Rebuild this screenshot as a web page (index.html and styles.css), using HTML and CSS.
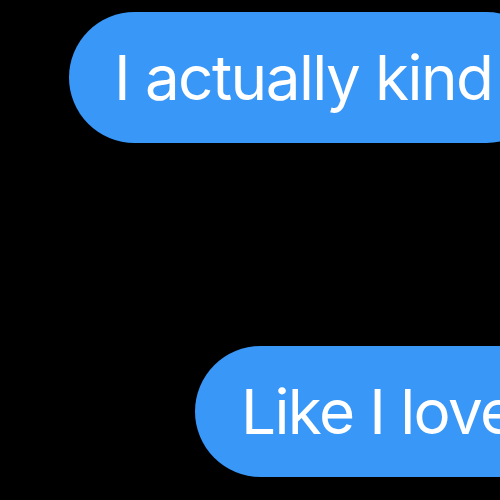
FILE: index.html
```html
<!DOCTYPE html>
<html>
<head>
<meta charset="utf-8">
<link rel="stylesheet" href="styles.css">
</head>
<body>
<div class="thread">
  <div class="bubble bubble-first">I actually kind</div>
  <div class="bubble bubble-second">Like I love</div>
</div>
</body>
</html>
```
FILE: styles.css
```css
html, body {
  margin: 0;
  padding: 0;
  background: #000;
  overflow: hidden;
  width: 500px;
  height: 500px;
}
.thread {
  display: flex;
  flex-direction: column;
  align-items: flex-start;
  padding-top: 12px;
  gap: 203px;
}
.bubble {
  background: #3897f7;
  color: #fff;
  font-family: Inter, "Noto Sans", sans-serif;
  font-size: 62px;
  letter-spacing: -1.6px;
  height: 131px;
  line-height: 131px;
  padding: 0 60px 0 45px;
  border-radius: 66px;
  white-space: nowrap;
  flex: none;
}
.bubble-first {
  margin-left: 69px;
}
.bubble-second {
  margin-left: 195px;
  padding-left: 46px;
}
```
